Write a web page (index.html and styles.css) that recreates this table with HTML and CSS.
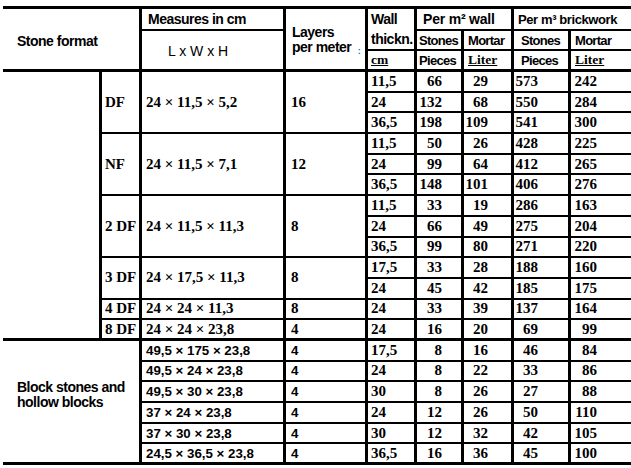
FILE: index.html
```html
<!DOCTYPE html>
<html lang="en">
<head>
<meta charset="utf-8">
<title>Stone formats</title>
<link rel="stylesheet" href="styles.css">
</head>
<body>
<div class="sheet">
  <div class="grid">
    <!-- header row 1 -->
    <div class="c h s2 r3 tb hs">Stone format</div>
    <div class="c h hm">Measures in cm</div>
    <div class="c h r3 tb hl"><span>Layers<br>per meter <span class="colon">:</span></span></div>
    <div class="c h r2 hw"><span>Wall<br>thickn.</span></div>
    <div class="c h s2 hp2">Per m² wall</div>
    <div class="c h s2 last hp3">Per m³ brickwork</div>
    <!-- header row 2 -->
    <div class="c h r2 tb reg hx">L x W x H</div>
    <div class="c h sub p6">Stones</div>
    <div class="c h sub p7">Mortar</div>
    <div class="c h sub p8">Stones</div>
    <div class="c h sub last p9">Mortar</div>
    <!-- header row 3 -->
    <div class="c hu tb p5">cm</div>
    <div class="c h sub tb p6">Pieces</div>
    <div class="c hu tb p7">Liter</div>
    <div class="c h sub tb p8">Pieces</div>
    <div class="c hu tb last p9">Liter</div>

    <!-- DF -->
    <div class="c r13 tb blank"></div>
    <div class="c d r3 f">DF</div>
    <div class="c d r3 m">24 × 11,5 × 5,2</div>
    <div class="c d r3 l">16</div>
    <div class="c d w">11,5</div><div class="c d n6">66</div><div class="c d n7">29</div><div class="c d n8">573</div><div class="c d n9 last">242</div>
    <div class="c d w">24</div><div class="c d n6">132</div><div class="c d n7">68</div><div class="c d n8">550</div><div class="c d n9 last">284</div>
    <div class="c d w">36,5</div><div class="c d n6">198</div><div class="c d n7">109</div><div class="c d n8">541</div><div class="c d n9 last">300</div>

    <!-- NF -->
    <div class="c d r3 f">NF</div>
    <div class="c d r3 m">24 × 11,5 × 7,1</div>
    <div class="c d r3 l">12</div>
    <div class="c d w">11,5</div><div class="c d n6">50</div><div class="c d n7">26</div><div class="c d n8">428</div><div class="c d n9 last">225</div>
    <div class="c d w">24</div><div class="c d n6">99</div><div class="c d n7">64</div><div class="c d n8">412</div><div class="c d n9 last">265</div>
    <div class="c d w">36,5</div><div class="c d n6">148</div><div class="c d n7">101</div><div class="c d n8">406</div><div class="c d n9 last">276</div>

    <!-- 2 DF -->
    <div class="c d r3 f">2 DF</div>
    <div class="c d r3 m">24 × 11,5 × 11,3</div>
    <div class="c d r3 l">8</div>
    <div class="c d w">11,5</div><div class="c d n6">33</div><div class="c d n7">19</div><div class="c d n8">286</div><div class="c d n9 last">163</div>
    <div class="c d w">24</div><div class="c d n6">66</div><div class="c d n7">49</div><div class="c d n8">275</div><div class="c d n9 last">204</div>
    <div class="c d w">36,5</div><div class="c d n6">99</div><div class="c d n7">80</div><div class="c d n8">271</div><div class="c d n9 last">220</div>

    <!-- 3 DF -->
    <div class="c d r2 f">3 DF</div>
    <div class="c d r2 m">24 × 17,5 × 11,3</div>
    <div class="c d r2 l">8</div>
    <div class="c d w">17,5</div><div class="c d n6">33</div><div class="c d n7">28</div><div class="c d n8">188</div><div class="c d n9 last">160</div>
    <div class="c d w">24</div><div class="c d n6">45</div><div class="c d n7">42</div><div class="c d n8">185</div><div class="c d n9 last">175</div>

    <!-- 4 DF -->
    <div class="c d f">4 DF</div>
    <div class="c d m">24 × 24 × 11,3</div>
    <div class="c d l">8</div>
    <div class="c d w">24</div><div class="c d n6">33</div><div class="c d n7">39</div><div class="c d n8">137</div><div class="c d n9 last">164</div>

    <!-- 8 DF -->
    <div class="c d tb f">8 DF</div>
    <div class="c d tb m">24 × 24 × 23,8</div>
    <div class="c d tb l">4</div>
    <div class="c d tb w">24</div><div class="c d tb n6">16</div><div class="c d tb n7">20</div><div class="c d tb n8">69</div><div class="c d tb n9 last">99</div>

    <!-- Block stones -->
    <div class="c h s2 r6 tb hb"><span>Block stones and<br>hollow blocks</span></div>
    <div class="c bs m">49,5 × 175 × 23,8</div><div class="c bs l">4</div>
    <div class="c d w">17,5</div><div class="c d n6">8</div><div class="c d n7">16</div><div class="c d n8">46</div><div class="c d n9 last">84</div>

    <div class="c bs m">49,5 × 24 × 23,8</div><div class="c bs l">4</div>
    <div class="c d w">24</div><div class="c d n6">8</div><div class="c d n7">22</div><div class="c d n8">33</div><div class="c d n9 last">86</div>

    <div class="c bs m">49,5 × 30 × 23,8</div><div class="c bs l">4</div>
    <div class="c d w">30</div><div class="c d n6">8</div><div class="c d n7">26</div><div class="c d n8">27</div><div class="c d n9 last">88</div>

    <div class="c bs m">37 × 24 × 23,8</div><div class="c bs l">4</div>
    <div class="c d w">24</div><div class="c d n6">12</div><div class="c d n7">26</div><div class="c d n8">50</div><div class="c d n9 last">110</div>

    <div class="c bs m">37 × 30 × 23,8</div><div class="c bs l">4</div>
    <div class="c d w">30</div><div class="c d n6">12</div><div class="c d n7">32</div><div class="c d n8">42</div><div class="c d n9 last">105</div>

    <div class="c bs tb m">24,5 × 36,5 × 23,8</div><div class="c bs tb l">4</div>
    <div class="c d tb w">36,5</div><div class="c d tb n6">16</div><div class="c d tb n7">36</div><div class="c d tb n8">45</div><div class="c d tb n9 last">100</div>
  </div>
</div>
</body>
</html>
```
FILE: styles.css
```css
html, body {
  margin: 0;
  padding: 0;
  background: #ffffff;
  color: #000000;
}

.sheet {
  padding: 6px 0 0 3px;
}

.grid {
  display: grid;
  width: 628px;
  grid-template-columns: 99px 40px 144px 82px 49px 47px 50px 57px 60px;
  grid-template-rows: 22px 20px 21px repeat(19, 20.7px);
  border-top: 3px solid #000;
}

.c {
  box-sizing: border-box;
  border-right: 3px solid #000;
  border-bottom: 2px solid #000;
  display: flex;
  align-items: center;
  white-space: nowrap;
  overflow: hidden;
}

.last { border-right: 0; }
.tb { border-bottom-width: 3px; }
.s2 { grid-column: span 2; }
.r2 { grid-row: span 2; }
.r3 { grid-row: span 3; }
.r6 { grid-row: span 6; }
.r13 { grid-row: span 13; }

/* header text */
.h {
  font-family: "Liberation Sans", Arial, sans-serif;
  font-weight: bold;
  font-size: 14px;
  letter-spacing: -0.5px;
}
.sub {
  font-size: 13px;
  letter-spacing: -0.7px;
}
.reg {
  font-weight: normal;
  letter-spacing: 0;
}
.hu {
  font-family: "Liberation Serif", "Times New Roman", serif;
  font-weight: bold;
  font-size: 13.5px;
  text-decoration: underline;
}

.hs { padding: 4px 0 0 14px; }
.hm { padding-left: 6px; }
.hl { padding: 5px 0 0 6px; line-height: 15px; }
.hw { padding-left: 3px; line-height: 20px; align-items: flex-start; }
.hp2 { padding-left: 6px; font-size: 14px; letter-spacing: -0.2px; }
.hp3 { padding-left: 4px; font-size: 13px; letter-spacing: -0.4px; }
.hx { padding: 2px 0 0 26px; }
.hb { padding: 0 0 13px 14px; line-height: 15.5px; }

.colon {
  color: #1f5fd6;
  font-size: 9px;
  letter-spacing: 0;
  vertical-align: -2px;
  padding-left: 3px;
}

.p5 { padding-left: 3px; }
.p6 { padding-left: 2px; }
.p7 { padding-left: 4px; }
.p8 { padding-left: 7px; }
.p9 { padding-left: 4px; }

/* data */
.d {
  font-family: "Liberation Serif", "Times New Roman", serif;
  font-weight: bold;
  font-size: 15px;
}
.bs {
  font-family: "Liberation Sans", Arial, sans-serif;
  font-weight: bold;
  font-size: 13.3px;
}

.f { padding-left: 3px; }
.m { padding-left: 4px; }
.l { padding-left: 5px; }
.w { padding-left: 3px; }
.n6, .n7, .n8, .n9 { justify-content: flex-end; }
.n6 { padding-right: 19px; }
.n7 { padding-right: 23px; }
.n8 { padding-right: 30px; }
.n9 { padding-right: 34px; }
```
